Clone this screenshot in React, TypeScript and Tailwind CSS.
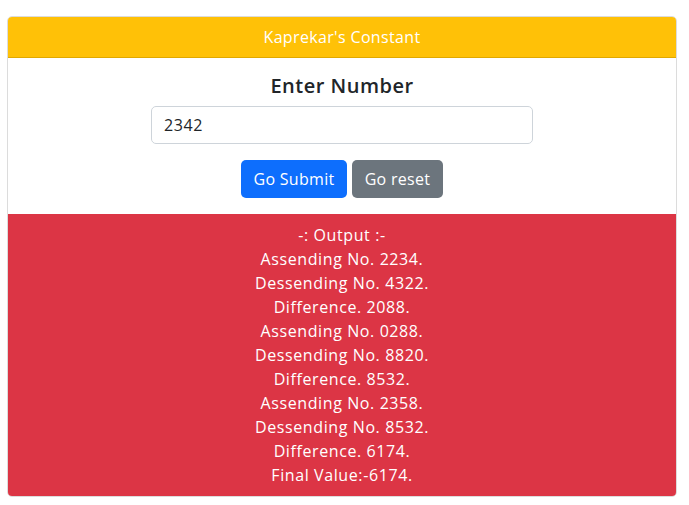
export default function App() {
  const lines = [
    "-: Output :-",
    "Assending No. 2234.",
    "Dessending No. 4322.",
    "Difference. 2088.",
    "Assending No. 0288.",
    "Dessending No. 8820.",
    "Difference. 8532.",
    "Assending No. 2358.",
    "Dessending No. 8532.",
    "Difference. 6174.",
    "Final Value:-6174.",
  ];

  return (
    <div className="min-h-[505px] bg-white pt-4 px-[7px] font-['Open_Sans',sans-serif]">
      <div className="w-[670px] rounded-[5px] border border-[#dcdcdc] overflow-hidden">
        <div className="h-[41px] bg-[#ffc107] border-b border-[#e0a800] flex items-center justify-center text-white text-[16px] tracking-[0.35px]">
          Kaprekar's Constant
        </div>
        <div className="bg-white pt-[16px] pb-[16px] flex flex-col items-center">
          <h5 className="text-[20px] leading-[24px] font-semibold text-[#212529] tracking-[0.5px]">Enter Number</h5>
          <input
            defaultValue="2342"
            className="mt-2 w-[382px] h-[38px] rounded-[5px] border border-[#ced4da] px-3 text-[16px] text-[#212529] tracking-[0.6px] outline-none"
          />
          <div className="mt-4 flex gap-[5px]">
            <button className="h-[38px] w-[106px] rounded-[5px] bg-[#0d6efd] text-white text-[16px] tracking-[0.3px]">Go Submit</button>
            <button className="h-[38px] w-[91px] rounded-[5px] bg-[#6c757d] text-white text-[16px] tracking-[0.3px]">Go reset</button>
          </div>
        </div>
        <div className="bg-[#dc3545] pt-[9px] pb-[9px] flex flex-col items-center text-white text-[16px] leading-[24px] tracking-[0.6px]">
          {lines.map((l, i) => (
            <div key={i}>{l}</div>
          ))}
        </div>
      </div>
    </div>
  );
}
